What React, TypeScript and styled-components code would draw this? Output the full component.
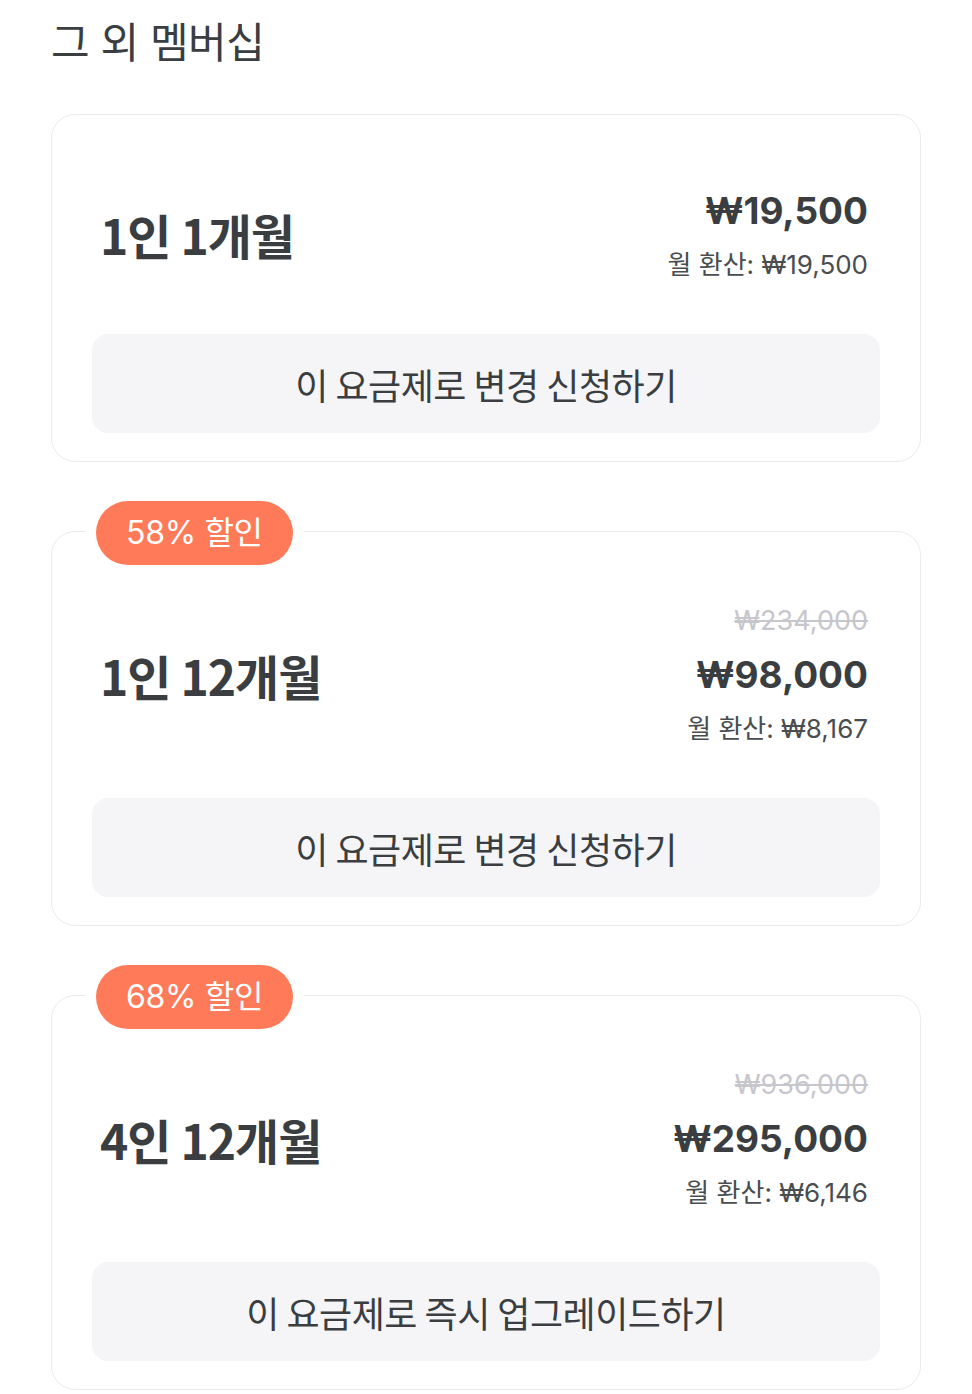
import React from "react";
import styled, { createGlobalStyle } from "styled-components";

const Global = createGlobalStyle`
  html, body { margin: 0; padding: 0; background: #ffffff; }
  body { font-family: "Noto Sans CJK KR", "Noto Sans", sans-serif; color: #3a3e41; }
  * { box-sizing: border-box; }
`;

const Page = styled.div`
  padding: 13px 51px 4px 51px;
  display: flex;
  flex-direction: column;
`;

const Heading = styled.h2`
  margin: 0 0 41px 0;
  font-family: "Inter", "Noto Sans CJK KR", sans-serif;
  font-size: 42px;
  font-weight: 400;
  line-height: 60px;
  color: #3a3e41;
  letter-spacing: -0.5px;
`;

const List = styled.div`
  display: flex;
  flex-direction: column;
  gap: 69px;
`;

const Card = styled.section`
  position: relative;
  border: 1.5px solid #ebebee;
  border-radius: 24px;
  padding: 70px 40px 28px 40px;
  background: #fff;
`;

const Badge = styled.div`
  position: absolute;
  top: -31px;
  left: 44px;
  height: 64px;
  padding: 0 30px;
  border-radius: 32px;
  background: #ff7a59;
  color: #fff;
  font-family: "Inter", "Noto Sans CJK KR", sans-serif;
  font-size: 32px;
  line-height: 64px;
  letter-spacing: -0.3px;
  box-shadow: 0 0 0 11px #fff;
`;

const Row = styled.div`
  display: flex;
  align-items: center;
  justify-content: space-between;
  padding: 0 12px 0 8px;
`;

const Title = styled.div`
  font-size: 48px;
  font-weight: 700;
  color: #3a3e41;
  letter-spacing: -1px;
`;

const PriceBox = styled.div`
  display: flex;
  flex-direction: column;
  align-items: flex-end;
  font-family: "Inter", "Noto Sans CJK KR", sans-serif;
`;

const Original = styled.div`
  font-size: 27px;
  line-height: 38px;
  color: #c6c6cc;
  text-decoration: line-through;
  text-decoration-thickness: 2px;
  margin-bottom: 9px;
`;

const Price = styled.div`
  font-size: 37px;
  font-weight: 700;
  line-height: 52px;
  color: #3a3e41;
`;

const Monthly = styled.div`
  margin-top: 10px;
  font-size: 26px;
  line-height: 36px;
  color: #4a4d50;
`;

const ActionButton = styled.button`
  margin-top: 51px;
  width: 100%;
  height: 99px;
  border: none;
  border-radius: 16px;
  background: #f5f5f8;
  color: #3a3e41;
  font-family: inherit;
  font-size: 36px;
  letter-spacing: -0.5px;
  cursor: pointer;
`;

type Plan = {
  title: string;
  price: string;
  monthly: string;
  original?: string;
  badge?: string;
  action: string;
};

const plans: Plan[] = [
  { title: "1인 1개월", price: "₩19,500", monthly: "월 환산: ₩19,500", action: "이 요금제로 변경 신청하기" },
  { title: "1인 12개월", price: "₩98,000", monthly: "월 환산: ₩8,167", original: "₩234,000", badge: "58% 할인", action: "이 요금제로 변경 신청하기" },
  { title: "4인 12개월", price: "₩295,000", monthly: "월 환산: ₩6,146", original: "₩936,000", badge: "68% 할인", action: "이 요금제로 즉시 업그레이드하기" },
];

export default function App() {
  return (
    <>
      <Global />
      <Page>
        <Heading>그 외 멤버십</Heading>
        <List>
          {plans.map((p) => (
            <Card key={p.title}>
              {p.badge && <Badge>{p.badge}</Badge>}
              <Row>
                <Title>{p.title}</Title>
                <PriceBox>
                  {p.original && <Original>{p.original}</Original>}
                  <Price>{p.price}</Price>
                  <Monthly>{p.monthly}</Monthly>
                </PriceBox>
              </Row>
              <ActionButton>{p.action}</ActionButton>
            </Card>
          ))}
        </List>
      </Page>
    </>
  );
}
